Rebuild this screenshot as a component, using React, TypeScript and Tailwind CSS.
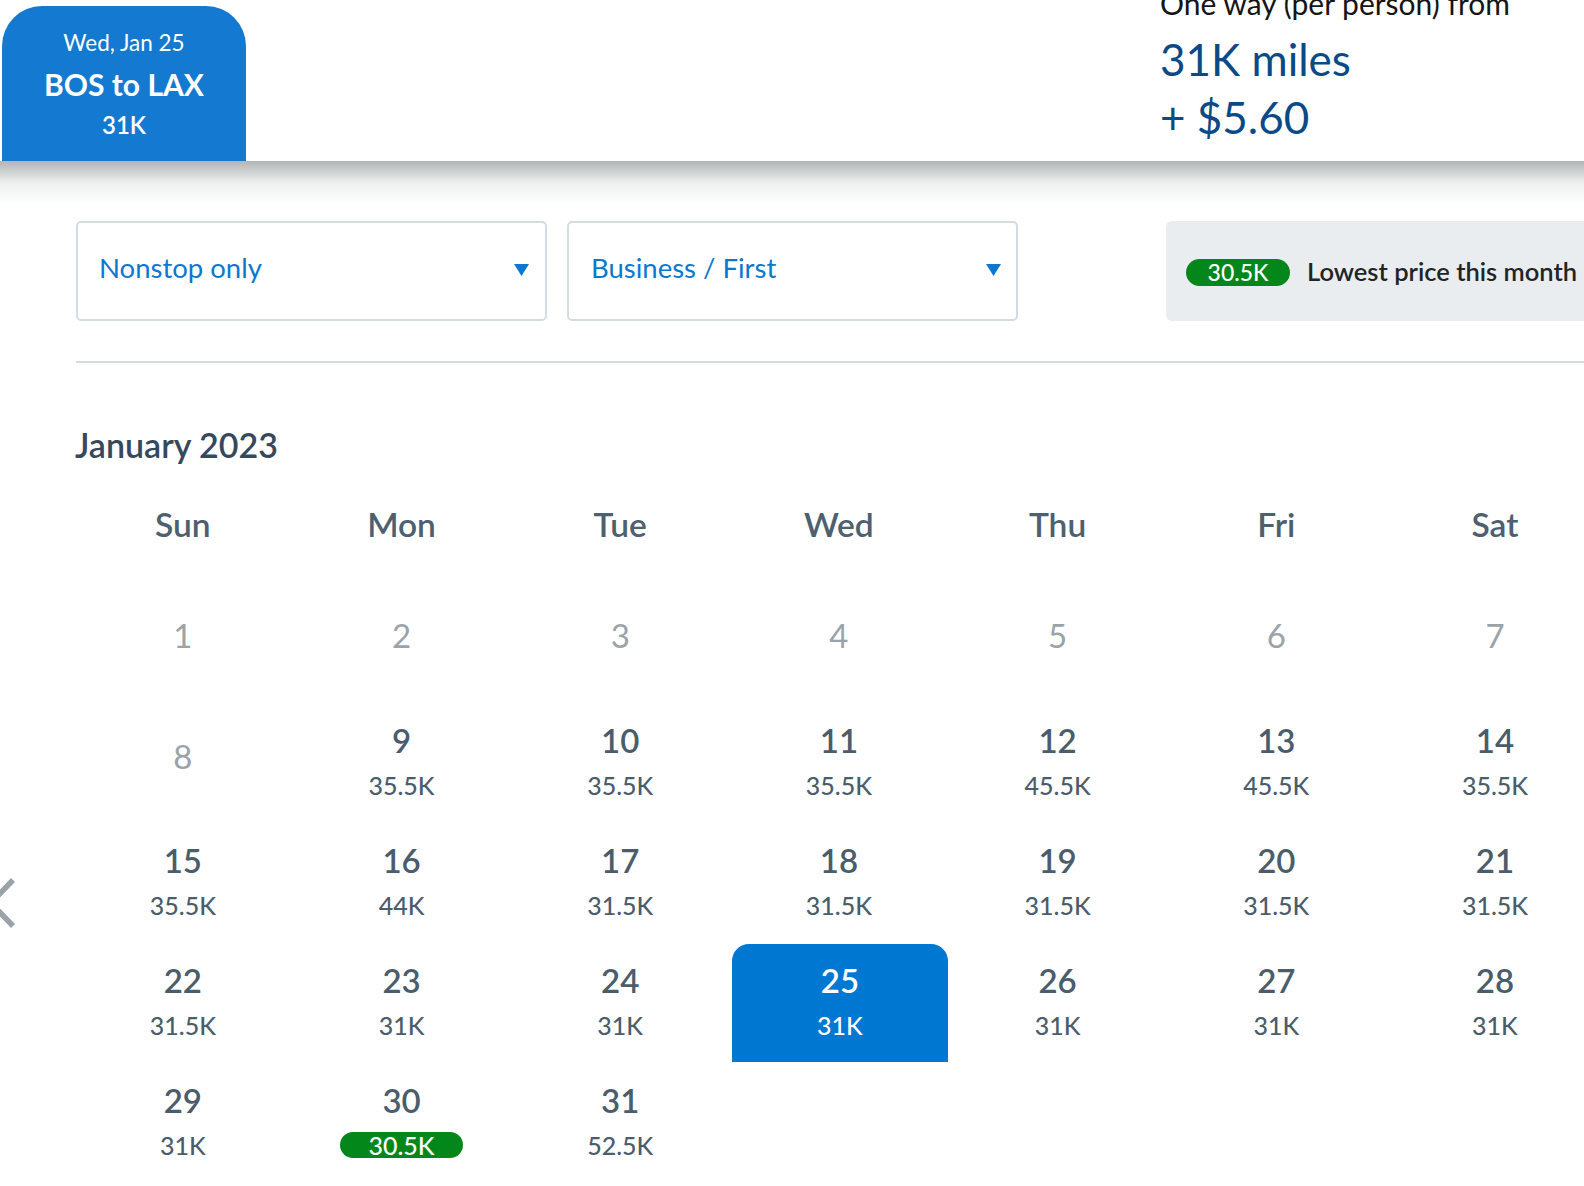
import React from 'react';

type Day = { d: number; price?: string; muted?: boolean; low?: boolean; selected?: boolean };

const weekdays = ['Sun', 'Mon', 'Tue', 'Wed', 'Thu', 'Fri', 'Sat'];

const firstWeek: number[] = [1, 2, 3, 4, 5, 6, 7];

const weeks: (Day | null)[][] = [
  [
    { d: 8, muted: true },
    { d: 9, price: '35.5K' },
    { d: 10, price: '35.5K' },
    { d: 11, price: '35.5K' },
    { d: 12, price: '45.5K' },
    { d: 13, price: '45.5K' },
    { d: 14, price: '35.5K' },
  ],
  [
    { d: 15, price: '35.5K' },
    { d: 16, price: '44K' },
    { d: 17, price: '31.5K' },
    { d: 18, price: '31.5K' },
    { d: 19, price: '31.5K' },
    { d: 20, price: '31.5K' },
    { d: 21, price: '31.5K' },
  ],
  [
    { d: 22, price: '31.5K' },
    { d: 23, price: '31K' },
    { d: 24, price: '31K' },
    { d: 25, price: '31K', selected: true },
    { d: 26, price: '31K' },
    { d: 27, price: '31K' },
    { d: 28, price: '31K' },
  ],
  [
    { d: 29, price: '31K' },
    { d: 30, price: '30.5K', low: true },
    { d: 31, price: '52.5K' },
    null,
    null,
    null,
    null,
  ],
];

function Caret() {
  return (
    <svg width="15" height="12" viewBox="0 0 15 12" className="shrink-0 mt-[4px]">
      <polygon points="0,0 15,0 7.5,12" fill="#0b78d0" />
    </svg>
  );
}

function DayCell({ day }: { day: Day | null }) {
  if (!day) return <div className="h-[120px]" />;
  if (day.muted) {
    return (
      <div className="h-[120px] flex flex-col items-center pt-[31px]">
        <span className="text-[33px] leading-[42px] text-[#9aa3a8]">{day.d}</span>
      </div>
    );
  }
  return (
    <div className="h-[120px]">
      <div
        className={
          day.selected
            ? 'h-[118px] ml-[2px] flex flex-col items-center pt-[15px] rounded-t-[17px] bg-[#0078d2] text-white'
            : 'h-[118px] flex flex-col items-center pt-[15px] text-[#4a5d6c]'
        }
      >
        <span className="text-[33px] leading-[42px] font-semibold">{day.d}</span>
        {day.low ? (
          <span className="mt-[11px] h-[26px] w-[123px] rounded-full bg-[#04871a] text-white text-[25px] leading-[26px] font-medium text-center">
            {day.price}
          </span>
        ) : (
          <span className="mt-[9px] text-[25px] leading-[30px] font-medium">{day.price}</span>
        )}
      </div>
    </div>
  );
}

export default function App() {
  return (
    <div
      className="relative w-[1584px] h-[1186px] overflow-hidden bg-white"
      style={{ fontFamily: 'Lato, "Noto Sans", sans-serif' }}
    >
      {/* top bar */}
      <div className="h-[161px] flex overflow-hidden">
        <div className="ml-[2px] mt-[6px] w-[244px] h-[155px] rounded-t-[40px] bg-[#1479d0] text-white flex flex-col items-center pt-[22px]">
          <span className="text-[22.5px] leading-[30px]">Wed, Jan 25</span>
          <span className="mt-[8px] text-[30px] leading-[36px] font-bold">BOS to LAX</span>
          <span className="mt-[7px] text-[24px] leading-[32px] font-semibold">31K</span>
        </div>
        <div className="ml-[914px] flex flex-col">
          <span className="-mt-[15px] text-[30px] leading-[36px] text-[#151515] whitespace-nowrap">
            One way (per person) from
          </span>
          <span className="mt-[11px] text-[44px] leading-[54px] text-[#0b4a86] whitespace-nowrap">31K miles</span>
          <span className="mt-[4px] text-[44px] leading-[54px] text-[#0b4a86] whitespace-nowrap">+ $5.60</span>
        </div>
      </div>
      <div className="h-[44px] bg-gradient-to-b from-[#b1b5b7] via-[#eef0f0] to-white" />

      {/* filters */}
      <div className="mt-[16px] flex items-start pl-[76px]">
        <div className="w-[471px] h-[100px] rounded-[5px] border-2 border-[#d3dce4] flex items-center justify-between pl-[21px] pr-[16px] pb-[6px]">
          <span className="text-[27.5px] text-[#0b78d0]">Nonstop only</span>
          <Caret />
        </div>
        <div className="ml-[20px] w-[451px] h-[100px] rounded-[5px] border-2 border-[#d3dce4] flex items-center justify-between pl-[22px] pr-[15px] pb-[6px]">
          <span className="text-[27.5px] text-[#0b78d0]">Business / First</span>
          <Caret />
        </div>
        <div className="ml-[148px] flex-1 h-[100px] rounded-l-[6px] bg-[#eaedef] flex items-center pl-[20px] pt-[2px]">
          <span className="h-[27px] w-[104px] rounded-full bg-[#04871a] text-white text-[23px] leading-[27px] font-medium text-center">
            30.5K
          </span>
          <span className="ml-[17px] -mt-[2px] text-[25.5px] font-semibold text-[#222426] whitespace-nowrap">
            Lowest price this month
          </span>
        </div>
      </div>

      <div className="mt-[40px] ml-[76px] h-[2px] bg-[#d3dbe2]" />

      {/* calendar */}
      <div className="mt-[61px] ml-[75px] text-[34px] leading-[42px] font-semibold text-[#36495a]">
        January 2023
      </div>

      <div className="mt-[37px] ml-[73.5px] grid grid-cols-[repeat(7,218.7px)]">
        {weekdays.map(w => (
          <div key={w} className="text-center text-[33.5px] leading-[42px] font-semibold text-[#4d6070]">
            {w}
          </div>
        ))}
        {firstWeek.map(n => (
          <div key={n} className="h-[159px] flex items-center justify-center pt-[20px]">
            <span className="text-[33px] leading-[42px] text-[#9aa3a8]">{n}</span>
          </div>
        ))}
        {weeks.flat().map((day, i) => (
          <DayCell key={i} day={day} />
        ))}
      </div>

      {/* previous month arrow */}
      <svg className="absolute left-0 top-[877px]" width="16" height="52" viewBox="0 0 16 52">
        <polyline points="13,3 -9,26 13,49" fill="none" stroke="#9aa3a8" strokeWidth="5.5" />
      </svg>
    </div>
  );
}
